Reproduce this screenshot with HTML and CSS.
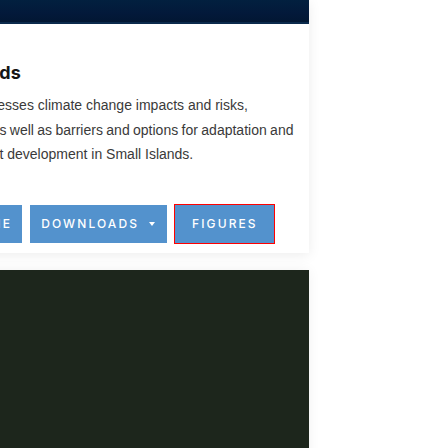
FILE: index.html
```html
<!DOCTYPE html>
<html lang="en">
<head>
<meta charset="utf-8">
<title>Small Islands</title>
<link rel="stylesheet" href="styles.css">
</head>
<body>
  <article class="card">
    <div class="banner"></div>
    <div class="card-body">
      <h2 class="title">Small Islands</h2>
      <p class="summary">
        <span class="line line-1">This chapter assesses climate change impacts and risks,</span>
        <span class="line line-2">vulnerabilities, as well as barriers and options for adaptation and</span>
        <span class="line line-3">climate resilient development in Small Islands.</span>
      </p>
      <div class="actions">
        <a class="btn" href="#">Read online</a>
        <a class="btn btn-drop" href="#">Downloads <span class="caret"></span></a>
        <a class="btn btn-focus" href="#">Figures</a>
      </div>
    </div>
  </article>
  <section class="dark-panel"></section>
</body>
</html>
```

FILE: styles.css
```css
html, body {
  margin: 0;
  padding: 0;
  background: #ffffff;
  overflow: hidden;
}

body {
  font-family: Inter, "Noto Sans", sans-serif;
  color: #333333;
}

.card {
  box-sizing: border-box;
  width: 428px;
  margin-left: -119px;
  background: #ffffff;
  box-shadow: 0 2px 12px rgba(0, 0, 0, 0.08);
  padding-bottom: 10px;
}

.banner {
  height: 22px;
  background: linear-gradient(180deg, #02203f 0%, #03193a 60%, #021733 100%);
  border-bottom: 2px solid #0b2a4c;
}

.card-body {
  padding: 0 16px;
}

.title {
  margin: 37px 0 0 8px;
  font-size: 18px;
  line-height: 24px;
  font-weight: 700;
  color: #161616;
}

.summary {
  margin: 8px 0 0;
  font-family: "Liberation Sans", Arial, sans-serif;
  font-size: 14px;
  line-height: 24.5px;
  color: #3a3a3a;
}

.line {
  display: block;
  white-space: nowrap;
}

.line-1 { margin-left: -2.4px; }
.line-2 { margin-left: 2.5px; word-spacing: -0.5px; }
.line-3 { margin-left: 9.9px; }

.actions {
  display: flex;
  gap: 8px;
  margin-top: 38px;
}

.btn {
  display: inline-flex;
  align-items: center;
  height: 38px;
  padding: 0 10px 0 12px;
  background: #5392cd;
  color: #ffffff;
  text-decoration: none;
  text-transform: uppercase;
  font-size: 12px;
  font-weight: 500;
  letter-spacing: 2.1px;
}

.btn-drop {
  padding: 0 12px 0 11px;
}

.caret {
  display: inline-block;
  width: 0;
  height: 0;
  margin-left: 10px;
  border-left: 3.5px solid transparent;
  border-right: 3.5px solid transparent;
  border-top: 4px solid #ffffff;
}

.btn-focus {
  padding: 0 16px 0 17px;
  outline: 1px solid #ff0000;
}

.dark-panel {
  width: 428px;
  margin-left: -119px;
  margin-top: 17px;
  height: 300px;
  background: #1d261c;
  box-shadow: 0 0 12px rgba(0, 0, 0, 0.06);
}
```
